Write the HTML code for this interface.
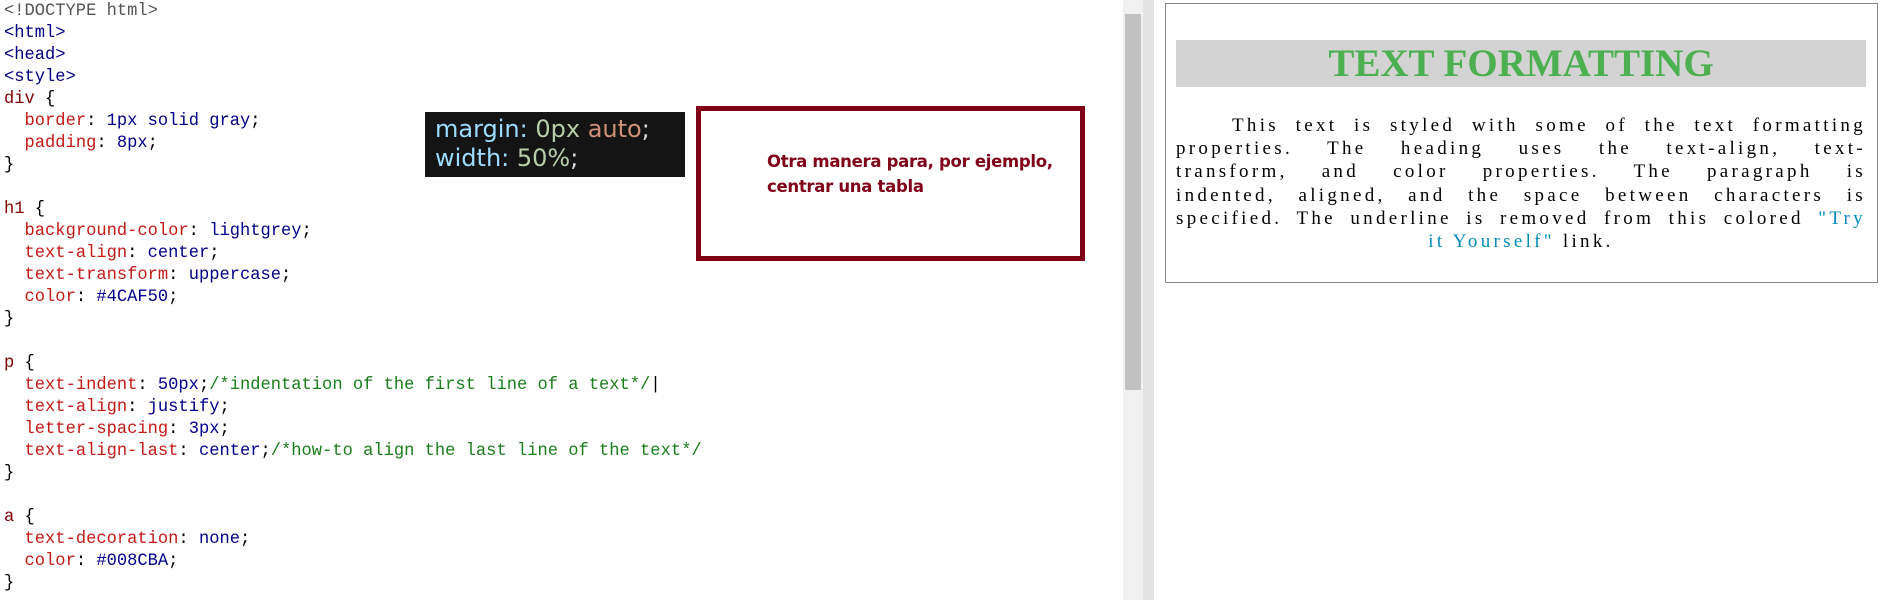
<!DOCTYPE html>
<html><head><style>
body{margin:0;width:1885px;height:600px;background:#fff;overflow:hidden;position:relative;font-family:"Liberation Sans",sans-serif}
.code{position:absolute;left:4px;top:1px;font-family:"Liberation Mono",monospace;font-size:17.1px;line-height:22px;white-space:pre;color:#000}
.g{color:#555}.t{color:#000080}.s{color:#800000}.p{color:#c41a16}.v{color:#00008b}.c{color:#1a7f1a}
.dark{position:absolute;left:425px;top:112px;width:260px;height:65px;background:#141414;font-family:"DejaVu Sans",sans-serif;font-size:24px;line-height:29px;color:#9cdcfe;padding-left:10px;box-sizing:border-box;padding-top:3px}
.red{position:absolute;left:696px;top:106px;width:389px;height:155px;border:5px solid #800018;box-sizing:border-box}
.red div{position:absolute;left:66px;top:38px;color:#800018;font-weight:bold;font-size:16.5px;line-height:25px;font-family:"DejaVu Sans","Liberation Sans",sans-serif;letter-spacing:-0.3px}
.track{position:absolute;left:1123px;top:0;width:20px;height:600px;background:#f0f0f0}
.thumb{position:absolute;left:1125px;top:14px;width:16px;height:376px;background:#c1c1c1}
.div{position:absolute;left:1143px;top:0;width:11px;height:600px;background:#e3e3e3}
.box{position:absolute;left:1165px;top:3px;width:713px;height:280px;border:1px solid #888;box-sizing:border-box}
.h1{position:absolute;left:1176px;top:40px;width:690px;height:47px;background:#d3d3d3;color:#4caf50;font-family:"Liberation Serif",serif;font-weight:bold;font-size:39px;line-height:47px;text-align:center}
.para{position:absolute;left:1176px;top:114px;width:690px;font-family:"Liberation Serif",serif;font-size:19px;line-height:23.2px;letter-spacing:3.3px;color:#000}
.para div{text-align:justify;text-align-last:justify;white-space:nowrap}
.para div.l{text-align:center;text-align-last:center}
a{color:#008cba;text-decoration:none}
</style></head><body>
<div class="code"><span class="g">&lt;!DOCTYPE html&gt;</span>
<span class="t">&lt;html&gt;</span>
<span class="t">&lt;head&gt;</span>
<span class="t">&lt;style&gt;</span>
<span class="s">div</span> {
  <span class="p">border</span>: <span class="v">1px solid gray</span>;
  <span class="p">padding</span>: <span class="v">8px</span>;
}

<span class="s">h1</span> {
  <span class="p">background-color</span>: <span class="v">lightgrey</span>;
  <span class="p">text-align</span>: <span class="v">center</span>;
  <span class="p">text-transform</span>: <span class="v">uppercase</span>;
  <span class="p">color</span>: <span class="v">#4CAF50</span>;
}

<span class="s">p</span> {
  <span class="p">text-indent</span>: <span class="v">50px</span>;<span class="c">/*indentation of the first line of a text*/</span>|
  <span class="p">text-align</span>: <span class="v">justify</span>;
  <span class="p">letter-spacing</span>: <span class="v">3px</span>;
  <span class="p">text-align-last</span>: <span class="v">center</span>;<span class="c">/*how-to align the last line of the text*/</span>
}

<span class="s">a</span> {
  <span class="p">text-decoration</span>: <span class="v">none</span>;
  <span class="p">color</span>: <span class="v">#008CBA</span>;
}</div>
<div class="dark">margin: <span style="color:#b5cea8">0px</span> <span style="color:#ce9178">auto</span><span style="color:#ddd">;</span><br>width: <span style="color:#b5cea8">50%</span><span style="color:#ddd">;</span></div>
<div class="red"><div>Otra manera para, por ejemplo,<br>centrar una tabla</div></div>
<div class="track"></div><div class="thumb"></div><div class="div"></div>
<div class="box"></div>
<div class="h1">TEXT FORMATTING</div>
<div class="para">
<div style="padding-left:56px">This text is styled with some of the text formatting</div>
<div>properties. The heading uses the text-align, text-</div>
<div>transform, and color properties. The paragraph is</div>
<div>indented, aligned, and the space between characters is</div>
<div>specified. The underline is removed from this colored <a>"Try</a></div>
<div class="l"><a>it Yourself"</a> link.</div>
</div>
</body></html>
